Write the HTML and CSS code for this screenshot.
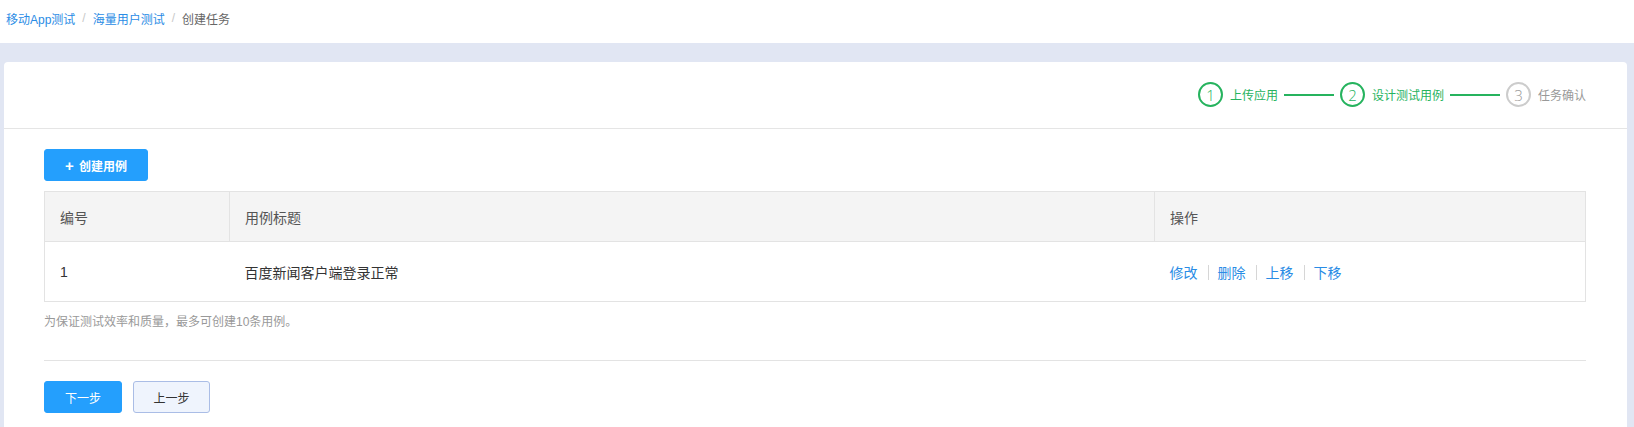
FILE: index.html
```html
<!DOCTYPE html>
<html lang="zh-CN">
<head>
<meta charset="utf-8">
<title>创建任务</title>
<link rel="stylesheet" href="styles.css">
</head>
<body>
<div class="crumbs">
  <a class="crumb-link" href="#">移动App测试</a>
  <span class="crumb-sep">/</span>
  <a class="crumb-link" href="#">海量用户测试</a>
  <span class="crumb-sep">/</span>
  <span class="crumb-current">创建任务</span>
</div>
<div class="main">
  <div class="card">
    <div class="card-head">
      <div class="steps">
        <div class="step done"><span class="step-num">1</span><span class="step-label">上传应用</span></div>
        <span class="step-line"></span>
        <div class="step done"><span class="step-num">2</span><span class="step-label">设计测试用例</span></div>
        <span class="step-line"></span>
        <div class="step todo"><span class="step-num">3</span><span class="step-label">任务确认</span></div>
      </div>
    </div>
    <div class="card-body">
      <button class="btn btn-primary btn-create"><span class="plus">+</span>创建用例</button>
      <table class="case-table">
        <colgroup>
          <col class="col-id">
          <col class="col-title">
          <col class="col-op">
        </colgroup>
        <thead>
          <tr><th>编号</th><th>用例标题</th><th>操作</th></tr>
        </thead>
        <tbody>
          <tr>
            <td>1</td>
            <td>百度新闻客户端登录正常</td>
            <td class="ops"><a href="#">修改</a><span class="op-sep"></span><a href="#">删除</a><span class="op-sep"></span><a href="#">上移</a><span class="op-sep"></span><a href="#">下移</a></td>
          </tr>
        </tbody>
      </table>
      <p class="hint">为保证测试效率和质量，最多可创建10条用例。</p>
      <div class="divider"></div>
      <div class="actions">
        <button class="btn btn-primary btn-next">下一步</button>
        <button class="btn btn-ghost btn-prev">上一步</button>
      </div>
    </div>
  </div>
</div>
</body>
</html>
```

FILE: styles.css
```css
* { box-sizing: border-box; }
html, body { margin: 0; padding: 0; }
body {
  width: 1634px;
  height: 427px;
  overflow: hidden;
  background: #ffffff;
  font-family: "Liberation Sans", "Noto Sans CJK SC", sans-serif;
  color: #333;
}

.crumbs {
  height: 43px;
  display: flex;
  align-items: center;
  padding: 0 0 7px 6px;
  font-size: 12px;
}
.crumb-link { color: #2a8ce5; text-decoration: none; }
.crumb-sep { color: #c8c8c8; margin: 0 7px; }
.crumb-current { color: #666; }

.main {
  background: #e1e6f3;
  padding: 19px 7px 0 4px;
  height: 384px;
}
.card {
  background: #fff;
  border-radius: 4px 4px 0 0;
  height: 420px;
}
.card-head {
  height: 67px;
  border-bottom: 1px solid #e5e5e5;
  display: flex;
  align-items: center;
  justify-content: flex-end;
  padding: 0 41px 1px 0;
}
.steps { display: flex; align-items: center; }
.step { display: flex; align-items: center; }
.step-num {
  width: 25px;
  height: 25px;
  border: 2px solid #26b35e;
  border-radius: 50%;
  display: flex;
  align-items: center;
  justify-content: center;
  font-size: 15px;
  color: #26b35e;
  font-family: "Open Sans", "Liberation Sans", sans-serif;
  font-weight: 300;
}
.step-label { font-size: 12px; color: #26b35e; margin-left: 7px; }
.step.todo .step-num { border-color: #cccccc; color: #999; }
.step.todo .step-label { color: #999; }
.step-line {
  width: 50px;
  height: 2px;
  background: #26b35e;
  margin: 0 6px 0 6px;
}

.card-body { padding: 20px 41px 0 40px; }

.btn {
  height: 32px;
  border-radius: 3px;
  font-size: 12px;
  font-family: "Liberation Sans", "Noto Sans CJK SC", sans-serif;
  cursor: pointer;
  display: inline-flex;
  align-items: center;
  justify-content: center;
  padding: 0;
}
.btn-primary { background: #249ffd; border: 1px solid #249ffd; color: #fff; }
.btn-create { width: 104px; font-weight: bold; }
.plus { font-size: 15px; margin-right: 5px; font-weight: bold; }
.btn-next { width: 78px; }
.btn-ghost { background: #eff4fd; border: 1px solid #aabde6; color: #333; }
.btn-prev { width: 77px; }

.case-table {
  margin-top: 10px;
  width: 100%;
  border-collapse: collapse;
  border: 1px solid #e3e3e3;
  font-size: 14px;
  table-layout: fixed;
}
.col-id { width: 185px; }
.col-title { width: 925px; }
.case-table th {
  height: 50px;
  background: #f4f4f4;
  color: #555;
  font-weight: normal;
  text-align: left;
  padding: 0 15px;
  border: 1px solid #e3e3e3;
}
.case-table td {
  height: 60px;
  padding: 0 15px;
  color: #333;
  border-top: 1px solid #e3e3e3;
}
.ops { font-size: 13px; }
.ops a { color: #2a8ce5; text-decoration: none; font-size: 14px; }
.op-sep {
  display: inline-block;
  width: 1px;
  height: 15px;
  background: #d6d6d6;
  margin: 0 9px 0 10px;
  vertical-align: -2px;
}

.hint {
  margin: 12px 0 0;
  font-size: 12px;
  line-height: 16px;
  color: #999;
}
.divider {
  margin-top: 30px;
  height: 1px;
  background: #e3e3e3;
}
.actions {
  margin-top: 20px;
  display: flex;
  gap: 11px;
}
```
